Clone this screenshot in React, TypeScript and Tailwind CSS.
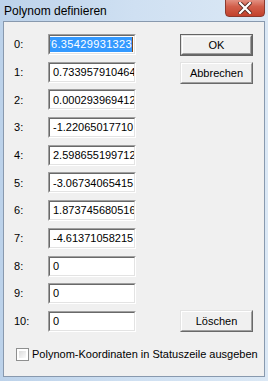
import React from 'react';

const values = [
  '-76.35429931323',
  '0.7339579104645',
  '0.000293969412',
  '-1.22065017710',
  '2.598655199712',
  '-3.06734065415',
  '1.873745680516',
  '-4.61371058215',
  '0',
  '0',
  '0',
];

const font = { fontFamily: '"Segoe UI", "Liberation Sans", Arial, sans-serif' };

function Field({ value, selected }: { value: string; selected?: boolean }) {
  return (
    <div className="w-[88px] h-[21px] border-t border-l border-t-[#a0a0a0] border-l-[#a0a0a0] border-b border-r border-b-white border-r-white">
      <div className="w-full h-full border-t border-l border-t-[#696969] border-l-[#696969] border-b border-r border-b-[#e3e3e3] border-r-[#e3e3e3] bg-white overflow-hidden">
        {selected ? (
          <div className="flex justify-end h-full items-center pr-[1px]">
            <span className="bg-[#3399ff] text-white whitespace-nowrap leading-[15px] tracking-[0.35px]">{value}</span>
            <span className="w-px h-[15px] bg-[#7a4a20] shrink-0" />
          </div>
        ) : (
          <div className="h-full flex items-center pl-[3px] whitespace-nowrap text-black">{value}</div>
        )}
      </div>
    </div>
  );
}

function Button({ label, isDefault }: { label: string; isDefault?: boolean }) {
  return (
    <div className={`w-[73px] h-[22px] ${isDefault ? 'border border-[#646464]' : ''}`}>
      <div className="w-full h-full border-t border-l border-t-[#e3e3e3] border-l-[#e3e3e3] border-b border-r border-b-[#696969] border-r-[#696969]">
        <div className="w-full h-full border-t border-l border-t-white border-l-white border-b border-r border-b-[#a0a0a0] border-r-[#a0a0a0] bg-[#f0f0f0] flex items-center justify-center text-black">
          {label}
        </div>
      </div>
    </div>
  );
}

export default function App() {
  return (
    <div
      className="w-[268px] h-[381px] bg-gradient-to-r from-[#bcd2ea] via-[#cfe0f2] to-[#dbe8f5] flex flex-col text-[11px] overflow-hidden"
      style={font}
    >
      {/* title bar */}
      <div className="h-[21px] relative flex items-center pl-[4px] shrink-0">
        <span className="text-black text-[12px] leading-none">Polynom definieren</span>
        <div className="absolute left-[225px] top-[-4px] w-[40px] h-[21px] rounded-b-[4px] border border-[#8c3a2e] bg-gradient-to-b from-[#e8a59a] via-[#d25f4b] to-[#c2412c] flex items-center justify-center pt-[3px]">
          <svg width="14" height="12" viewBox="0 0 14 12">
            <path d="M2 1 L12 11 M12 1 L2 11" stroke="#5a2a22" strokeWidth="4" strokeLinecap="square" />
            <path d="M2 1 L12 11 M12 1 L2 11" stroke="#ffffff" strokeWidth="2.2" strokeLinecap="square" />
          </svg>
        </div>
      </div>

      {/* client area */}
      <div className="mx-[3px] w-[262px] h-[356px] border border-[#8899ae] bg-[#f0f0f0] flex flex-col pt-[12px]">
        <div className="flex">
          <div className="flex flex-col gap-[6.7px] pl-[10px]">
            {values.map((v, i) => (
              <div key={i} className="flex items-center h-[21px]">
                <span className="w-[34px] text-black">{i}:</span>
                <Field value={v} selected={i === 0} />
              </div>
            ))}
          </div>
          <div className="flex flex-col justify-between ml-[44px]">
            <div className="flex flex-col gap-[6px]">
              <Button label="OK" isDefault />
              <Button label="Abbrechen" />
            </div>
            <Button label="Löschen" />
          </div>
        </div>

        <div className="flex items-center mt-[14px] pl-[12px]">
          <div className="w-[13px] h-[13px] border border-[#8e8f8f] bg-white p-[2px]">
            <div className="w-full h-full bg-gradient-to-br from-[#dcdcdc] to-[#fbfbfb]" />
          </div>
          <span className="ml-[3px] text-black whitespace-nowrap">Polynom-Koordinaten in Statuszeile ausgeben</span>
        </div>
      </div>
    </div>
  );
}
